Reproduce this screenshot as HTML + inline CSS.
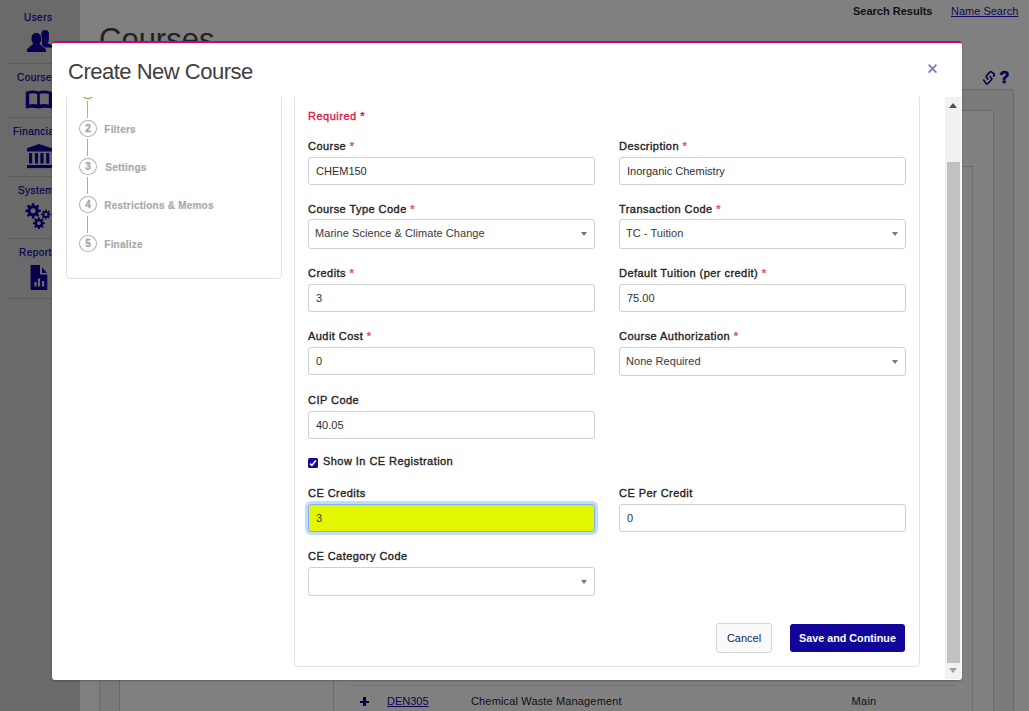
<!DOCTYPE html>
<html><head><meta charset="utf-8">
<style>
*{box-sizing:border-box;margin:0;padding:0}
html,body{width:1029px;height:711px;overflow:hidden;background:#808080;font-family:"Liberation Sans",sans-serif}
.a{position:absolute;white-space:nowrap}
#side{position:absolute;left:0;top:0;width:80px;height:711px;background:#6a6a6a}
.sl{position:absolute;font-size:10px;font-weight:normal;color:#0b0650;letter-spacing:.45px;line-height:12px;margin-top:1.6px;-webkit-text-stroke:.25px #0b0650}
.sd{position:absolute;left:8px;width:72px;height:1px;background:#5a5a5a}
#modal{position:absolute;left:52px;top:41px;width:910px;height:639px;background:#fff;border-top:2px solid #cf0077;border-radius:3px;box-shadow:0 1px 2px rgba(0,0,0,.25);overflow:hidden}
.lbl{position:absolute;font-size:11px;font-weight:normal;color:#222;line-height:13px;letter-spacing:.45px;-webkit-text-stroke:.35px currentColor}
.lbl i{font-style:normal;color:#e04d72}
.inp{position:absolute;width:287px;height:28px;border:1px solid #cfcfcf;border-radius:3px;background:#fff;font-size:11px;color:#2e2e2e;line-height:26px;padding-left:7px}
.sel{position:absolute;width:287px;height:29px;border:1px solid #cfcfcf;border-radius:3px;background:#fff;font-size:11px;color:#383838;line-height:27px;padding-left:6px;letter-spacing:.05px}
.sel:after{content:"";position:absolute;right:7px;top:11.5px;border-left:3.5px solid transparent;border-right:3.5px solid transparent;border-top:4px solid #777}
.step{position:absolute;width:18px;height:17.2px;border:1px solid #b0b0b0;border-radius:50%;font-size:10px;font-weight:bold;color:#a4a4a4;text-align:center;line-height:16px;-webkit-text-stroke:.3px #a4a4a4}
.stl{position:absolute;font-size:10px;font-weight:bold;color:#aaa;line-height:12px;letter-spacing:.22px;margin-top:.8px;margin-left:.3px;-webkit-text-stroke:.2px #aaa}
.conn{position:absolute;left:87px;width:1px;background:#ababab}
</style></head><body>

<!-- background page -->
<!-- background containers -->
<div style="position:absolute;left:80px;top:0;width:949px;height:711px;background:#808080"></div>
<div style="position:absolute;left:99px;top:89px;width:915px;height:700px;border:1px solid #6b6b6b;border-radius:3px;background:#7a7a7a"></div>
<div style="position:absolute;left:119px;top:110px;width:875px;height:700px;border:1px solid #6b6b6b;border-radius:3px;background:#808080"></div>
<div style="position:absolute;left:333px;top:166px;width:640px;height:700px;border:1px solid #6d6d6d;background:#808080"></div>
<div style="position:absolute;left:350px;top:685px;width:606px;height:1px;background:#727272"></div>
<div style="position:absolute;left:360px;top:700.5px;width:9px;height:2.6px;background:#07004f"></div>
<div style="position:absolute;left:363.2px;top:697.2px;width:2.6px;height:9px;background:#07004f"></div>
<div class="a" style="left:387px;top:695px;font-size:11px;line-height:13px;color:#0b0650;text-decoration:underline">DEN305</div>
<div class="a" style="left:471px;top:695px;font-size:11px;line-height:13px;color:#111;letter-spacing:.15px">Chemical Waste Management</div>
<div class="a" style="left:851.5px;top:695px;font-size:11px;line-height:13px;color:#111;letter-spacing:.3px">Main</div>
<div class="a" style="left:999.5px;top:68px;font-size:16px;font-weight:bold;line-height:19px;color:#07004f;-webkit-text-stroke:.7px #07004f">?</div>
<svg width="16" height="17" style="position:absolute;left:981px;top:69px" fill="none" stroke="#07004f" stroke-width="1.6" stroke-linejoin="round" stroke-linecap="round">
  <path d="M6.9 10.2 L5.3 8.1 Q4.9 7.5 5.4 6.9 L9 2.9 Q9.7 2.3 10.4 2.8 L13.2 5 Q13.8 5.6 13.3 6.2 L12.5 7.2"/>
  <path d="M9.1 7.7 L10.7 9.4 Q11.1 10 10.6 10.5 L6.7 14.7 Q6 15.2 5.3 14.7 L2.6 11.1"/>
</svg>

<div id="side">
  <div class="sl" style="left:24px;top:10px">Users</div>
  <div class="sd" style="top:63px"></div>
  <div class="sl" style="left:17px;top:70px">Courses</div>
  <div class="sd" style="top:117px"></div>
  <div class="sl" style="left:13px;top:124px">Financial</div>
  <div class="sd" style="top:176px"></div>
  <div class="sl" style="left:18px;top:183px">System</div>
  <div class="sd" style="top:238px"></div>
  <div class="sl" style="left:19px;top:245px">Reports</div>
  <div class="sd" style="top:298px"></div>
  <svg width="80" height="300" style="position:absolute;left:0;top:0" fill="#07004f">
    <!-- users -->
    <rect x="41.3" y="30" width="7.6" height="13.5" rx="3.8" ry="4.2"/>
    <path d="M42 41.5 L47 43 L52 45.3 L52 47.6 L42.5 47.6 Z"/>
    <g stroke="#6a6a6a" stroke-width="1.4">
      <rect x="31.5" y="33" width="9.6" height="11.6" rx="4.6" ry="5"/>
      <path d="M33.5 43.5 L27 49.3 L27 52 L45.9 52 L45.9 49.3 L39.3 43.5 Z"/>
    </g>
    <rect x="31.5" y="33" width="9.6" height="11.6" rx="4.6" ry="5"/>
    <path d="M33.5 43.5 L27 49.3 L27 52 L45.9 52 L45.9 49.3 L39.3 43.5 Z"/>
    <!-- book -->
    <path d="M25.8 92 Q31.5 89.2 38.5 91.5 Q45.5 89.2 52 92 L52 108.6 Q45.5 106.8 38.5 108.6 Q31.5 106.8 25.8 108.6 Z M29.2 93.8 L29.2 104.6 Q33 103.6 37.2 104.6 L37.2 93.8 Q33 92.6 29.2 93.8 Z M39.8 93.8 L39.8 104.6 Q44 103.6 48.8 104.6 L48.8 93.8 Q44 92.6 39.8 93.8 Z" fill-rule="evenodd"/>
    <!-- bank -->
    <path d="M27 148.2 L38.9 144 L52 148.2 L52 151.6 L27 151.6 Z"/>
    <rect x="29" y="153" width="3.2" height="10.5" rx=".6"/>
    <rect x="34.9" y="153" width="3.2" height="10.5" rx=".6"/>
    <rect x="40.4" y="153" width="3.2" height="10.5" rx=".6"/>
    <rect x="46.1" y="153" width="3.2" height="10.5" rx=".6"/>
    <rect x="27" y="165" width="25" height="3.1"/>
    <!-- gears -->
    <g id="gear"><path fill-rule="evenodd" d="M31.77 205.36 L31.87 203.20 L34.33 203.20 L34.43 205.36 L36.01 206.01 L37.60 204.55 L39.35 206.30 L37.89 207.89 L38.54 209.47 L40.70 209.57 L40.70 212.03 L38.54 212.13 L37.89 213.71 L39.35 215.30 L37.60 217.05 L36.01 215.59 L34.43 216.24 L34.33 218.40 L31.87 218.40 L31.77 216.24 L30.19 215.59 L28.60 217.05 L26.85 215.30 L28.31 213.71 L27.66 212.13 L25.50 212.03 L25.50 209.57 L27.66 209.47 L28.31 207.89 L26.85 206.30 L28.60 204.55 L30.19 206.01 Z M30.60 210.80 a2.5 2.5 0 1 0 5.00 0 a2.5 2.5 0 1 0 -5.00 0 Z"/><path fill-rule="evenodd" d="M45.07 211.00 L45.11 209.56 L46.69 209.56 L46.73 211.00 L47.72 211.41 L48.76 210.42 L49.88 211.54 L48.89 212.58 L49.30 213.57 L50.74 213.61 L50.74 215.19 L49.30 215.23 L48.89 216.22 L49.88 217.26 L48.76 218.38 L47.72 217.39 L46.73 217.80 L46.69 219.24 L45.11 219.24 L45.07 217.80 L44.08 217.39 L43.04 218.38 L41.92 217.26 L42.91 216.22 L42.50 215.23 L41.06 215.19 L41.06 213.61 L42.50 213.57 L42.91 212.58 L41.92 211.54 L43.04 210.42 L44.08 211.41 Z M44.30 214.40 a1.6 1.6 0 1 0 3.20 0 a1.6 1.6 0 1 0 -3.20 0 Z"/><path fill-rule="evenodd" d="M37.88 219.02 L37.94 217.28 L39.86 217.28 L39.92 219.02 L41.13 219.52 L42.41 218.33 L43.77 219.69 L42.58 220.97 L43.08 222.18 L44.82 222.24 L44.82 224.16 L43.08 224.22 L42.58 225.43 L43.77 226.71 L42.41 228.07 L41.13 226.88 L39.92 227.38 L39.86 229.12 L37.94 229.12 L37.88 227.38 L36.67 226.88 L35.39 228.07 L34.03 226.71 L35.22 225.43 L34.72 224.22 L32.98 224.16 L32.98 222.24 L34.72 222.18 L35.22 220.97 L34.03 219.69 L35.39 218.33 L36.67 219.52 Z M37.00 223.20 a1.9 1.9 0 1 0 3.80 0 a1.9 1.9 0 1 0 -3.80 0 Z"/></g>
    <!-- report -->
    <path d="M30.6 265 L40 265 L40 274.6 L47.3 274.6 L47.3 290 L30.6 290 Z M34.4 282 L34.4 286.6 L36.6 286.6 L36.6 282 Z M37.9 278.4 L37.9 286.6 L40.1 286.6 L40.1 278.4 Z M41.9 281 L41.9 286.6 L44.1 286.6 L44.1 281 Z" fill-rule="evenodd"/>
    <path d="M42 267.2 L47 273.1 L42 273.1 Z"/>
  </svg>
</div>
<div class="a" style="left:99px;top:22.5px;font-size:31px;color:#222;line-height:34px">Courses</div>
<div class="a" style="left:853px;top:5px;font-size:11px;font-weight:bold;color:#111;line-height:13px">Search Results</div>
<div class="a" style="left:951px;top:5px;font-size:11px;color:#12085a;text-decoration:underline;line-height:13px">Name Search</div>

<!-- modal -->
<div id="modal">
  <div class="a" style="left:16px;top:16px;font-size:22px;letter-spacing:-.5px;color:#404040;line-height:25px">Create New Course</div>
  <svg width="12" height="12" style="position:absolute;left:874px;top:20px" stroke="#7f77cf" stroke-width="1.75" stroke-linecap="butt"><path d="M2.6 1.6 L10.4 9.6 M10.4 1.6 L2.6 9.6"/></svg>
</div>


<!-- modal body (page coords, clipped) -->
<div id="mb" style="position:absolute;left:0;top:0;width:1029px;height:711px;clip-path:inset(97px 84px 32px 52px)">
  <!-- stepper card -->
  <div style="position:absolute;left:66px;top:40px;width:216px;height:239px;border:1px solid #dee2e6;border-radius:4px"></div>
  <div class="step" style="left:79px;top:81px;height:18px;border:1.6px solid #6aa52f"></div>
  <div class="conn" style="top:101px;height:17px"></div>
  <div class="step" style="left:79px;top:120px">2</div>
  <div class="stl" style="left:104px;top:123px">Filters</div>
  <div class="conn" style="top:139px;height:17px"></div>
  <div class="step" style="left:79px;top:158px">3</div>
  <div class="stl" style="left:105px;top:161px">Settings</div>
  <div class="conn" style="top:177px;height:17px"></div>
  <div class="step" style="left:79px;top:196px">4</div>
  <div class="stl" style="left:104px;top:199px">Restrictions &amp; Memos</div>
  <div class="conn" style="top:216px;height:17px"></div>
  <div class="step" style="left:79px;top:235px">5</div>
  <div class="stl" style="left:104px;top:238px">Finalize</div>

  <!-- form card -->
  <div style="position:absolute;left:294px;top:40px;width:626px;height:627px;border:1px solid #dee2e6;border-radius:4px"></div>
  <div class="lbl" style="left:308px;top:110px;color:#d41a44;letter-spacing:.5px">Required *</div>

  <div class="lbl" style="left:308px;top:140px">Course <i>*</i></div>
  <div class="inp" style="left:308px;top:157px">CHEM150</div>
  <div class="lbl" style="left:619px;top:140px">Description <i>*</i></div>
  <div class="inp" style="left:619px;top:157px">Inorganic Chemistry</div>

  <div class="lbl" style="left:308px;top:203px">Course Type Code <i>*</i></div>
  <div class="sel" style="left:308px;top:219px;height:30px">Marine Science &amp; Climate Change</div>
  <div class="lbl" style="left:619px;top:203px">Transaction Code <i>*</i></div>
  <div class="sel" style="left:619px;top:219px;height:30px">TC - Tuition</div>

  <div class="lbl" style="left:308px;top:267px">Credits <i>*</i></div>
  <div class="inp" style="left:308px;top:284px">3</div>
  <div class="lbl" style="left:619px;top:267px">Default Tuition (per credit) <i>*</i></div>
  <div class="inp" style="left:619px;top:284px">75.00</div>

  <div class="lbl" style="left:308px;top:330px">Audit Cost <i>*</i></div>
  <div class="inp" style="left:308px;top:347px">0</div>
  <div class="lbl" style="left:619px;top:330px">Course Authorization <i>*</i></div>
  <div class="sel" style="left:619px;top:347px">None Required</div>

  <div class="lbl" style="left:308px;top:394px">CIP Code</div>
  <div class="inp" style="left:308px;top:411px">40.05</div>

  <svg width="10" height="10" style="position:absolute;left:308px;top:458px"><rect width="10" height="10" rx="1.6" fill="#1506a0"/><path d="M2 5.6 L3.9 7.4 L7.9 2.6" fill="none" stroke="#fff" stroke-width="1.5"/></svg>
  <div class="lbl" style="left:323px;top:455px">Show In CE Registration</div>

  <div class="lbl" style="left:308px;top:487px">CE Credits</div>
  <div class="inp" style="left:308px;top:504px;background:#e3f800;border:1px solid #7db1f6;box-shadow:0 0 0 3px #c5dbfb;color:#3a3a55">3</div>
  <div class="lbl" style="left:619px;top:487px">CE Per Credit</div>
  <div class="inp" style="left:619px;top:504px">0</div>

  <div class="lbl" style="left:308px;top:550px">CE Category Code</div>
  <div class="sel" style="left:308px;top:567px"></div>

  <div class="a" style="left:716px;top:623px;width:56px;height:29.5px;border:1px solid #d6d6d6;border-radius:3px;background:#fafafa;color:#1a1a5e;font-size:11px;line-height:28.5px;text-align:center">Cancel</div>
  <div class="a" style="left:790px;top:624px;width:115px;height:28px;border-radius:3px;background:#12069a;color:#fff;font-size:10.75px;font-weight:bold;line-height:28px;text-align:center">Save and Continue</div>
</div>

<!-- scrollbar -->
<div style="position:absolute;left:945px;top:97px;width:16px;height:582px;background:#f1f1f1"></div>
<div style="position:absolute;left:947px;top:162px;width:13px;height:501px;background:#c1c1c1"></div>
<div style="position:absolute;left:949px;top:103px;border-left:4.5px solid transparent;border-right:4.5px solid transparent;border-bottom:5px solid #505050"></div>
<div style="position:absolute;left:949px;top:668px;border-left:4.5px solid transparent;border-right:4.5px solid transparent;border-top:5px solid #a3a3a3"></div>

</body></html>
